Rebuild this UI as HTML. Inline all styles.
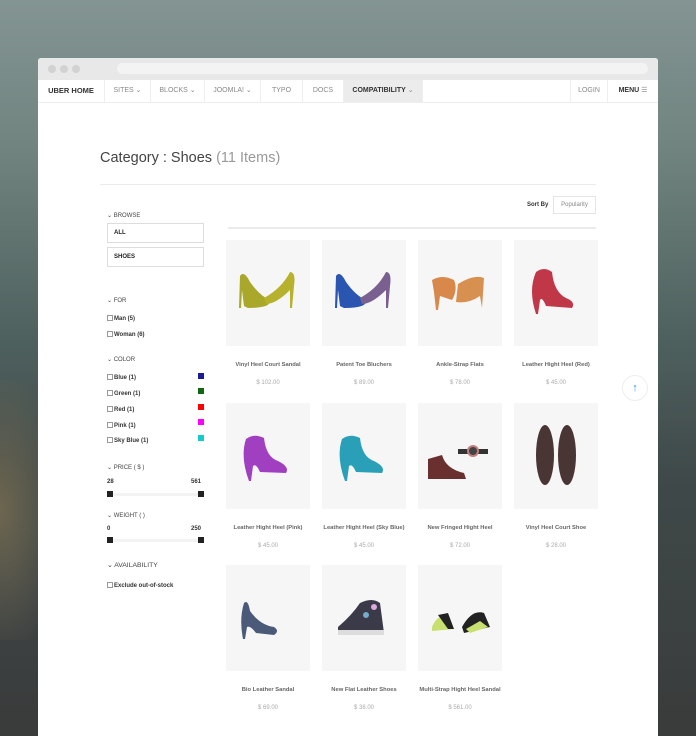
<!DOCTYPE html>
<html style="background:#3a3b3b"><head><meta charset="utf-8"><style>
*{margin:0;padding:0;box-sizing:border-box}
html,body{width:696px;height:736px;overflow:hidden}
body{font-family:"Liberation Sans",sans-serif;position:relative;
background:linear-gradient(180deg,#839493 0%,#71847f 20%,#4f625f 45%,#3f4949 65%,#3a3b3b 100%)}
.bgl{position:absolute;left:0;top:380px;width:60px;height:260px;background:radial-gradient(ellipse at 0% 50%,#6d6650 0%,rgba(80,80,70,0) 80%)}
.win{position:absolute;left:38px;top:58px;width:620px;height:678px;background:#fff;border-radius:3px 3px 0 0;overflow:hidden}
.tb{height:22px;background:#e8e8e8;position:relative}
.dot{position:absolute;top:7px;width:8px;height:8px;border-radius:50%;background:#d2d2d2}
.addr{position:absolute;left:79px;top:5px;width:531px;height:11px;border-radius:6px;background:#f3f3f3}
.nav{height:23px;border-bottom:1px solid #eee;position:relative;font-size:7px;color:#888}
.nav div{position:absolute;top:0;height:22px;line-height:22px;border-right:1px solid #eee;text-align:center}
.nav b{color:#333}
.abs{position:absolute}
h1{position:absolute;left:62px;top:92px;font-weight:400;font-size:14.5px;color:#444}
h1 span{color:#999}
.hr{position:absolute;height:1px;background:#ebebeb}
.sh{position:absolute;font-size:6px;color:#444;left:69px}
.box{position:absolute;left:69px;width:97px;height:20px;border:1px solid #ddd;font-size:6px;font-weight:bold;color:#222;padding-left:6px;line-height:18px}
.cb{position:absolute;left:69px;font-size:6px;font-weight:bold;color:#333}
.cb i{display:inline-block;width:6px;height:6px;border:1px solid #999;vertical-align:-1px;margin-right:1px}
.sw{position:absolute;left:160px;width:6px;height:6px}
.card{position:absolute;width:84px}
.img{height:106px;background:#f6f6f6}
.nm{font-size:5.8px;font-weight:bold;color:#666;text-align:center;margin-top:16px}
.pr{font-size:6px;color:#aaa;text-align:center;margin-top:12px}
.sl{position:absolute;left:69px;width:97px;height:3px;background:#f3f3f3}
.sl:before,.sl:after{content:"";position:absolute;top:-2px;width:6px;height:6px;background:#222}
.sl:before{left:0}.sl:after{right:0}
.sb{position:absolute;left:0;top:3px;width:200px;height:500px}
</style></head><body>
<div class="bgl"></div>
<div class="win">
<div class="tb"><span class="dot" style="left:10px"></span><span class="dot" style="left:22px"></span><span class="dot" style="left:34px"></span><span class="addr"></span></div>
<div class="nav">
<div style="left:0;width:67px;font-size:7.5px"><b>UBER HOME</b></div>
<div style="left:67px;width:46px">SITES ⌄</div>
<div style="left:113px;width:54px">BLOCKS ⌄</div>
<div style="left:167px;width:56px">JOOMLA! ⌄</div>
<div style="left:223px;width:42px">TYPO</div>
<div style="left:265px;width:41px">DOCS</div>
<div style="left:306px;width:79px;background:#ececec"><b>COMPATIBILITY</b> ⌄</div>
<div style="left:532px;width:38px;border-left:1px solid #eee">LOGIN</div>
<div style="left:570px;width:50px;border:0"><b>MENU</b> ☰</div>
</div>
<h1>Category : Shoes <span>(11 Items)</span></h1>
<div class="hr" style="left:62px;top:126px;width:496px"></div>
<div class="abs" style="left:489px;top:144px;font-size:6px;font-weight:bold;color:#333">Sort By</div>
<div class="abs" style="left:515px;top:138px;width:43px;height:18px;border:1px solid #e5e5e5;font-size:6px;color:#888;line-height:16px;text-align:center">Popularity</div>
<div class="hr" style="left:190px;top:169px;width:368px;height:2px"></div>

<div class="sb">
<div class="sh" style="top:151px">⌄ BROWSE</div>
<div class="box" style="top:162px">ALL</div>
<div class="box" style="top:186px">SHOES</div>
<div class="sh" style="top:236px">⌄ FOR</div>
<div class="cb" style="top:254px"><i></i>Man (5)</div>
<div class="cb" style="top:270px"><i></i>Woman (6)</div>
<div class="sh" style="top:295px">⌄ COLOR</div>
<div class="cb" style="top:313px"><i></i>Blue (1)</div><div class="sw" style="top:312px;background:#1a1a9a"></div>
<div class="cb" style="top:329px"><i></i>Green (1)</div><div class="sw" style="top:327px;background:#116611"></div>
<div class="cb" style="top:345px"><i></i>Red (1)</div><div class="sw" style="top:343px;background:#f00"></div>
<div class="cb" style="top:361px"><i></i>Pink (1)</div><div class="sw" style="top:358px;background:#f0f"></div>
<div class="cb" style="top:376px"><i></i>Sky Blue (1)</div><div class="sw" style="top:374px;background:#1cc"></div>
<div class="sh" style="top:403px">⌄ PRICE ( $ )</div>
<div class="cb" style="top:418px">28</div><div class="cb" style="top:418px;left:153px">561</div>
<div class="sl" style="top:432px"></div>
<div class="sh" style="top:451px">⌄ WEIGHT ( )</div>
<div class="cb" style="top:465px">0</div><div class="cb" style="top:465px;left:153px">250</div>
<div class="sl" style="top:478px"></div>
<div class="sh" style="top:500px;font-size:6.8px">⌄ AVAILABILITY</div>
<div class="cb" style="top:521px"><i></i>Exclude out-of-stock</div>
</div>

<div class="abs" style="left:584px;top:317px;width:26px;height:26px;border-radius:50%;border:1px solid #eee;background:#fff;color:#2a9de0;font-size:11px;font-weight:bold;text-align:center;line-height:24px">↑</div>

<div class="card" style="left:188px;top:182px"><div class="img"><svg width="84" height="106"><path d="M14 36 Q18 30 24 42 Q34 56 44 60 Q46 68 22 68 L18 66 L16 50 L15 68 L13 68 Z" fill="#a9a82a"/><path d="M64 32 Q70 32 68 46 L66 68 L64 68 L64 50 Q50 64 40 64 L38 58 Q56 48 64 32Z" fill="#b7b22e"/></svg></div><div class="nm">Vinyl Heel Court Sandal</div><div class="pr">$ 102.00</div></div>
<div class="card" style="left:284px;top:182px"><div class="img"><svg width="84" height="106"><path d="M14 36 Q18 30 24 42 Q34 56 44 60 Q46 68 22 68 L18 66 L16 50 L15 68 L13 68 Z" fill="#2a55b0"/><path d="M64 32 Q70 32 68 46 L66 68 L64 68 L64 50 Q50 64 40 64 L38 58 Q56 48 64 32Z" fill="#7a6090"/></svg></div><div class="nm">Patent Toe Bluchers</div><div class="pr">$ 89.00</div></div>
<div class="card" style="left:380px;top:182px"><div class="img"><svg width="84" height="106"><path d="M14 40 Q24 34 36 40 Q40 50 34 60 L22 56 L20 70 L18 70 L16 52 Z" fill="#d8884a"/><path d="M40 44 Q56 34 66 38 L64 68 L62 56 Q50 64 38 62 Z" fill="#d89050"/></svg></div><div class="nm">Ankle-Strap Flats</div><div class="pr">$ 78.00</div></div>
<div class="card" style="left:476px;top:182px"><div class="img"><svg width="84" height="106"><path d="M22 32 Q30 26 38 32 Q40 52 52 58 Q62 62 58 68 L32 66 Q28 56 26 60 L24 74 L22 74 Q14 50 22 32Z" fill="#c03848"/></svg></div><div class="nm">Leather Hight Heel (Red)</div><div class="pr">$ 45.00</div></div>

<div class="card" style="left:188px;top:345px"><div class="img"><svg width="84" height="106"><path d="M20 36 Q28 30 38 35 Q40 54 52 58 Q64 64 60 70 L34 69 Q30 60 27 63 L25 78 L23 78 Q14 54 20 36Z" fill="#a040c0"/></svg></div><div class="nm">Leather Hight Heel (Pink)</div><div class="pr">$ 45.00</div></div>
<div class="card" style="left:284px;top:345px"><div class="img"><svg width="84" height="106"><path d="M20 36 Q28 30 38 35 Q40 54 52 58 Q64 64 60 70 L34 69 Q30 60 27 63 L25 78 L23 78 Q14 54 20 36Z" fill="#2aa0b8"/></svg></div><div class="nm">Leather Hight Heel (Sky Blue)</div><div class="pr">$ 45.00</div></div>
<div class="card" style="left:380px;top:345px"><div class="img"><svg width="84" height="106"><path d="M10 56 L24 52 Q28 66 46 70 L48 76 L10 76 Z" fill="#6a3030"/><rect x="40" y="46" width="30" height="5" fill="#333"/><circle cx="55" cy="48" r="6" fill="#c08080"/><circle cx="55" cy="48" r="4" fill="#444"/></svg></div><div class="nm">New Fringed Hight Heel</div><div class="pr">$ 72.00</div></div>
<div class="card" style="left:476px;top:345px"><div class="img"><svg width="84" height="106"><ellipse cx="31" cy="52" rx="9" ry="30" fill="#4a3535"/><ellipse cx="53" cy="52" rx="9" ry="30" fill="#4a3535"/></svg></div><div class="nm">Vinyl Heel Court Shoe</div><div class="pr">$ 28.00</div></div>

<div class="card" style="left:188px;top:507px"><div class="img"><svg width="84" height="106"><path d="M18 38 Q22 34 24 46 Q34 60 48 62 Q54 66 48 70 L30 68 Q24 60 21 62 L19 74 L17 74 Q13 54 18 38Z" fill="#4a5a78"/></svg></div><div class="nm">Bio Leather Sandal</div><div class="pr">$ 69.00</div></div>
<div class="card" style="left:284px;top:507px"><div class="img"><svg width="84" height="106"><path d="M16 62 Q30 50 38 38 Q50 32 58 38 L62 68 L16 70 Z" fill="#3a3a48"/><circle cx="44" cy="50" r="3" fill="#7ac"/><circle cx="52" cy="42" r="3" fill="#dad"/><rect x="16" y="65" width="46" height="5" fill="#ddd"/></svg></div><div class="nm">New Flat Leather Shoes</div><div class="pr">$ 38.00</div></div>
<div class="card" style="left:380px;top:507px"><div class="img"><svg width="84" height="106"><path d="M14 62 Q20 48 30 52 L36 64 L14 66Z" fill="#c8e070"/><path d="M20 50 L30 48 L36 64 L30 64Z" fill="#222"/><path d="M44 62 Q54 44 66 48 L72 62 L46 68Z" fill="#222"/><path d="M48 64 L62 56 L70 62 L52 68Z" fill="#c8e070"/></svg></div><div class="nm">Multi-Strap Hight Heel Sandal</div><div class="pr">$ 561.00</div></div>
</div>
</body></html>
